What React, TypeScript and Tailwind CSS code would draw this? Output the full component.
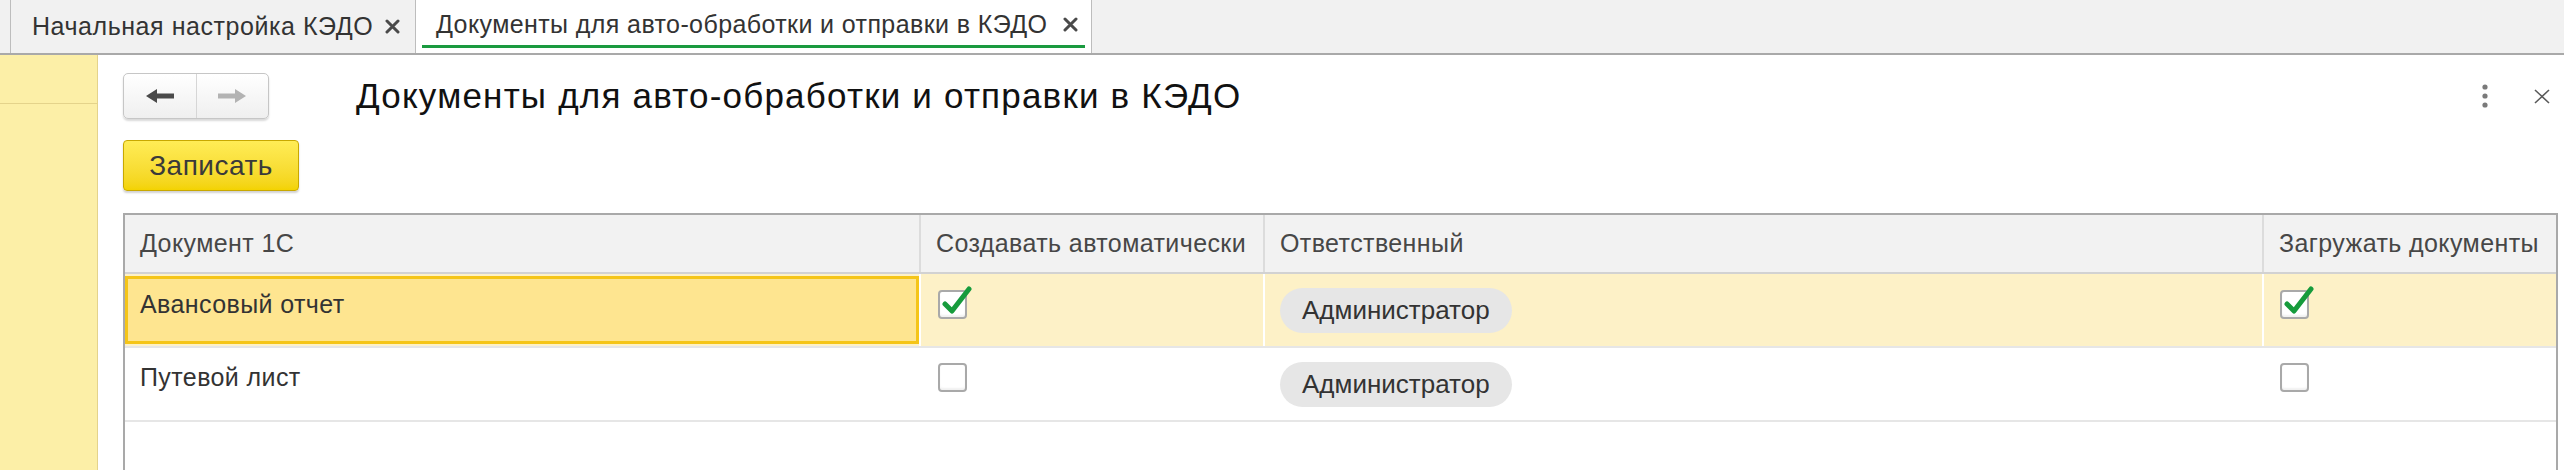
import React from 'react';

const CheckBox: React.FC<{ checked?: boolean }> = ({ checked }) => (
  <div className="relative w-[29px] h-[29px] rounded-[4px] border-2 border-[#a9a9a9] bg-white shadow-[inset_0_-2px_2px_rgba(0,0,0,0.06)]">
    {checked && (
      <svg className="absolute left-[-2px] top-[-6px]" width="36" height="34" viewBox="0 0 36 34">
        <path d="M7 18 L14 25 L31 3" fill="none" stroke="#169b3c" strokeWidth="5" strokeLinecap="round" strokeLinejoin="round" />
      </svg>
    )}
  </div>
);

const Pill: React.FC<{ label: string }> = ({ label }) => (
  <div className="inline-flex items-center h-[45px] px-[22px] rounded-full bg-[#e6e6e6] text-[26px] tracking-normal text-[#333]">
    {label}
  </div>
);

const TabClose: React.FC = () => (
  <svg className="shrink-0" width="15" height="15" viewBox="0 0 15 15">
    <path d="M2 2 L13 13 M13 2 L2 13" stroke="#4a4a4a" strokeWidth="3" strokeLinecap="round" />
  </svg>
);

const App: React.FC = () => {
  return (
    <div className="w-full h-[470px] overflow-hidden bg-white [font-family:'Liberation_Sans',Arial,sans-serif] flex flex-col">
      {/* tabs */}
      <div className="h-[55px] shrink-0 flex bg-[#f1f1f1] border-b-2 border-[#a9a9a9] pl-[10px]">
        <div className="w-[406px] flex items-center gap-[12px] pl-[21px] border-l border-r border-[#bdbdbd] text-[25px] tracking-[0.55px] text-[#333] whitespace-nowrap">
          <span>Начальная настройка КЭДО</span>
          <TabClose />
        </div>
        <div className="w-[676px] flex flex-col bg-white border-r border-[#bdbdbd]">
          <div className="flex-1 flex items-center gap-[16px] pl-[20px] pt-[4px] text-[25px] tracking-[0.4px] text-[#333] whitespace-nowrap">
            <span>Документы для авто-обработки и отправки в КЭДО</span>
            <TabClose />
          </div>
          <div className="h-[3px] mx-[6px] mb-[5px] bg-[#1a9a3f]" />
        </div>
      </div>

      <div className="flex-1 flex min-h-0">
        {/* sidebar */}
        <div className="w-[98px] shrink-0 bg-[#fcefa7] border-r border-[#e4d38b]">
          <div className="h-[49px] border-b border-[#e4d38b]" />
        </div>

        {/* form */}
        <div className="flex-1 flex flex-col pl-[25px] pr-[6px] pt-[18px] min-w-0">
          <div className="flex items-center">
            <div className="flex w-[146px] h-[46px] rounded-[5px] border border-[#c6c6c6] bg-gradient-to-b from-white to-[#efefef] shadow-[0_2px_2px_rgba(0,0,0,0.15)]">
              <div className="flex-1 flex items-center justify-center border-r border-[#d6d6d6]">
                <svg width="28" height="14" viewBox="0 0 28 14">
                  <path d="M0 7 L11 0 L11 4.5 L28 4.5 L28 9.5 L11 9.5 L11 14 Z" fill="#4a4a4a" />
                </svg>
              </div>
              <div className="flex-1 flex items-center justify-center">
                <svg width="28" height="14" viewBox="0 0 28 14">
                  <path d="M28 7 L17 0 L17 4.5 L0 4.5 L0 9.5 L17 9.5 L17 14 Z" fill="#b3b3b3" />
                </svg>
              </div>
            </div>
            <h1 className="ml-[87px] text-[35px] leading-[40px] tracking-[1.2px] text-[#111] whitespace-nowrap">
              Документы для авто-обработки и отправки в КЭДО
            </h1>
            <div className="ml-auto mr-[8px] flex items-center gap-[46px]">
              <svg width="6" height="24" viewBox="0 0 6 24">
                <circle cx="3" cy="3" r="2.6" fill="#7a7a7a" />
                <circle cx="3" cy="12" r="2.6" fill="#7a7a7a" />
                <circle cx="3" cy="21" r="2.6" fill="#7a7a7a" />
              </svg>
              <svg width="16" height="15" viewBox="0 0 16 15">
                <path d="M1 1 L15 14 M15 1 L1 14" stroke="#5a5a5a" strokeWidth="1.6" />
              </svg>
            </div>
          </div>

          <button className="mt-[21px] w-[176px] h-[51px] rounded-[4px] border border-[#c8a800] bg-gradient-to-b from-[#ffec55] to-[#f3d300] shadow-[0_2px_2px_rgba(0,0,0,0.18)] text-[28px] tracking-[0.5px] text-[#3a3a3a]">
            Записать
          </button>

          <div className="mt-[22px] flex-1 border-2 border-b-0 border-[#a9a9a9] text-[25px] tracking-[0.4px]">
            <div className="grid grid-cols-[794px_344px_999px_1fr] h-[59px] bg-[#f2f2f2] border-b-2 border-[#d2d2d2] text-[#474747]">
              <div className="flex items-center px-[15px]">Документ 1С</div>
              <div className="flex items-center px-[15px] border-l-2 border-[#dcdcdc] whitespace-nowrap">Создавать автоматически</div>
              <div className="flex items-center px-[15px] border-l-2 border-[#dcdcdc]">Ответственный</div>
              <div className="flex items-center px-[15px] border-l-2 border-[#dcdcdc] whitespace-nowrap">Загружать документы</div>
            </div>

            <div className="grid grid-cols-[794px_344px_999px_1fr] h-[74px] bg-[#fdf1c7] border-b-2 border-[#e6e6e6] text-[#333]">
              <div className="my-[2px] pl-[12px] pt-[11px] leading-[28px] border-[3px] border-[#f5c518] bg-[#fee590]">
                Авансовый отчет
              </div>
              <div className="pl-[17px] pt-[16px] border-l-2 border-white">
                <CheckBox checked />
              </div>
              <div className="pl-[15px] pt-[14px] border-l-2 border-white">
                <Pill label="Администратор" />
              </div>
              <div className="pl-[16px] pt-[16px] border-l-2 border-white">
                <CheckBox checked />
              </div>
            </div>

            <div className="grid grid-cols-[794px_344px_999px_1fr] h-[74px] border-b-2 border-[#e6e6e6] text-[#333]">
              <div className="pl-[15px] pt-[15px] leading-[28px]">Путевой лист</div>
              <div className="pl-[17px] pt-[15px] border-l-2 border-transparent">
                <CheckBox />
              </div>
              <div className="pl-[15px] pt-[14px] border-l-2 border-transparent">
                <Pill label="Администратор" />
              </div>
              <div className="pl-[16px] pt-[15px] border-l-2 border-transparent">
                <CheckBox />
              </div>
            </div>
          </div>
        </div>
      </div>
    </div>
  );
};

export default App;
